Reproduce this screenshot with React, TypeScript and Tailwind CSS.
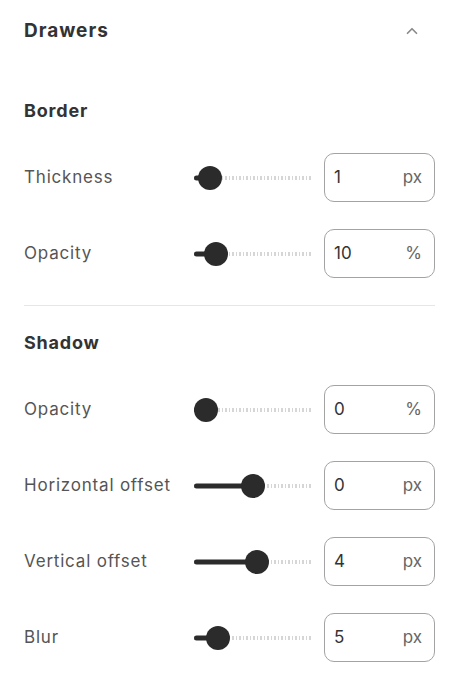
import React from 'react';
import { ChevronUp } from 'lucide-react';

type Row = { label: string; value: string; unit: string; pos: number };

const BORDER_ROWS: Row[] = [
  { label: 'Thickness', value: '1', unit: 'px', pos: 4 },
  { label: 'Opacity', value: '10', unit: '%', pos: 11 },
];

const SHADOW_ROWS: Row[] = [
  { label: 'Opacity', value: '0', unit: '%', pos: 0 },
  { label: 'Horizontal offset', value: '0', unit: 'px', pos: 50 },
  { label: 'Vertical offset', value: '4', unit: 'px', pos: 54 },
  { label: 'Blur', value: '5', unit: 'px', pos: 13 },
];

const TRACK_W = 118;
const KNOB = 24;

function Slider({ pos }: { pos: number }) {
  // knob center in px from track start
  const center = KNOB / 2 + ((TRACK_W - KNOB) * pos) / 100;
  return (
    <div className="relative h-[24px] w-[118px] shrink-0">
      <div className="absolute left-0 right-0 top-1/2 h-[4px] -translate-y-1/2 bg-[repeating-linear-gradient(90deg,#d6d6d6_0_1.5px,transparent_1.5px_3.5px)]" />
      <div
        className="absolute left-0 top-1/2 h-[5px] -translate-y-1/2 rounded-full bg-[#2b2b2b]"
        style={{ width: center }}
      />
      <div
        className="absolute top-0 h-[24px] w-[24px] rounded-full bg-[#2b2b2b]"
        style={{ left: center - KNOB / 2 }}
      />
    </div>
  );
}

function SettingRow({ row }: { row: Row }) {
  return (
    <div className="flex h-[49px] items-center">
      <div className="w-[170px] shrink-0 text-[17px] tracking-[0.8px] text-[#555]">{row.label}</div>
      <Slider pos={row.pos} />
      <div className="ml-[12px] flex h-[49px] w-[111px] items-center justify-between rounded-[10px] border-[1.5px] border-[#a3a3a3] pl-[9px] pr-[12px]">
        <span className="text-[17px] text-[#333]">{row.value}</span>
        <span className="text-[17px] text-[#666]">{row.unit}</span>
      </div>
    </div>
  );
}

export default function App() {
  return (
    <div className="min-h-[686px] w-[458px] bg-white pl-[24px] pr-[23px] font-['Inter','Liberation_Sans',sans-serif]">
      <div className="flex h-[62px] items-center justify-between">
        <span className="text-[19px] font-bold tracking-[1px] text-[#333]">Drawers</span>
        <ChevronUp className="mr-[14px] h-[18px] w-[18px] text-[#8a8a8a]" strokeWidth={2.25} />
      </div>

      <div className="mt-[36px] flex h-[24px] items-center text-[18px] font-bold tracking-[0.8px] text-[#333]">Border</div>
      <div className="mt-[31px] flex flex-col gap-[27px]">
        {BORDER_ROWS.map((r) => (
          <SettingRow key={r.label} row={r} />
        ))}
      </div>

      <div className="mt-[27px] h-px bg-[#e6e6e6]" />

      <div className="mt-[24px] flex h-[24px] items-center text-[18px] font-bold tracking-[0.8px] text-[#333]">Shadow</div>
      <div className="mt-[31px] flex flex-col gap-[27px]">
        {SHADOW_ROWS.map((r) => (
          <SettingRow key={r.label} row={r} />
        ))}
      </div>
    </div>
  );
}
